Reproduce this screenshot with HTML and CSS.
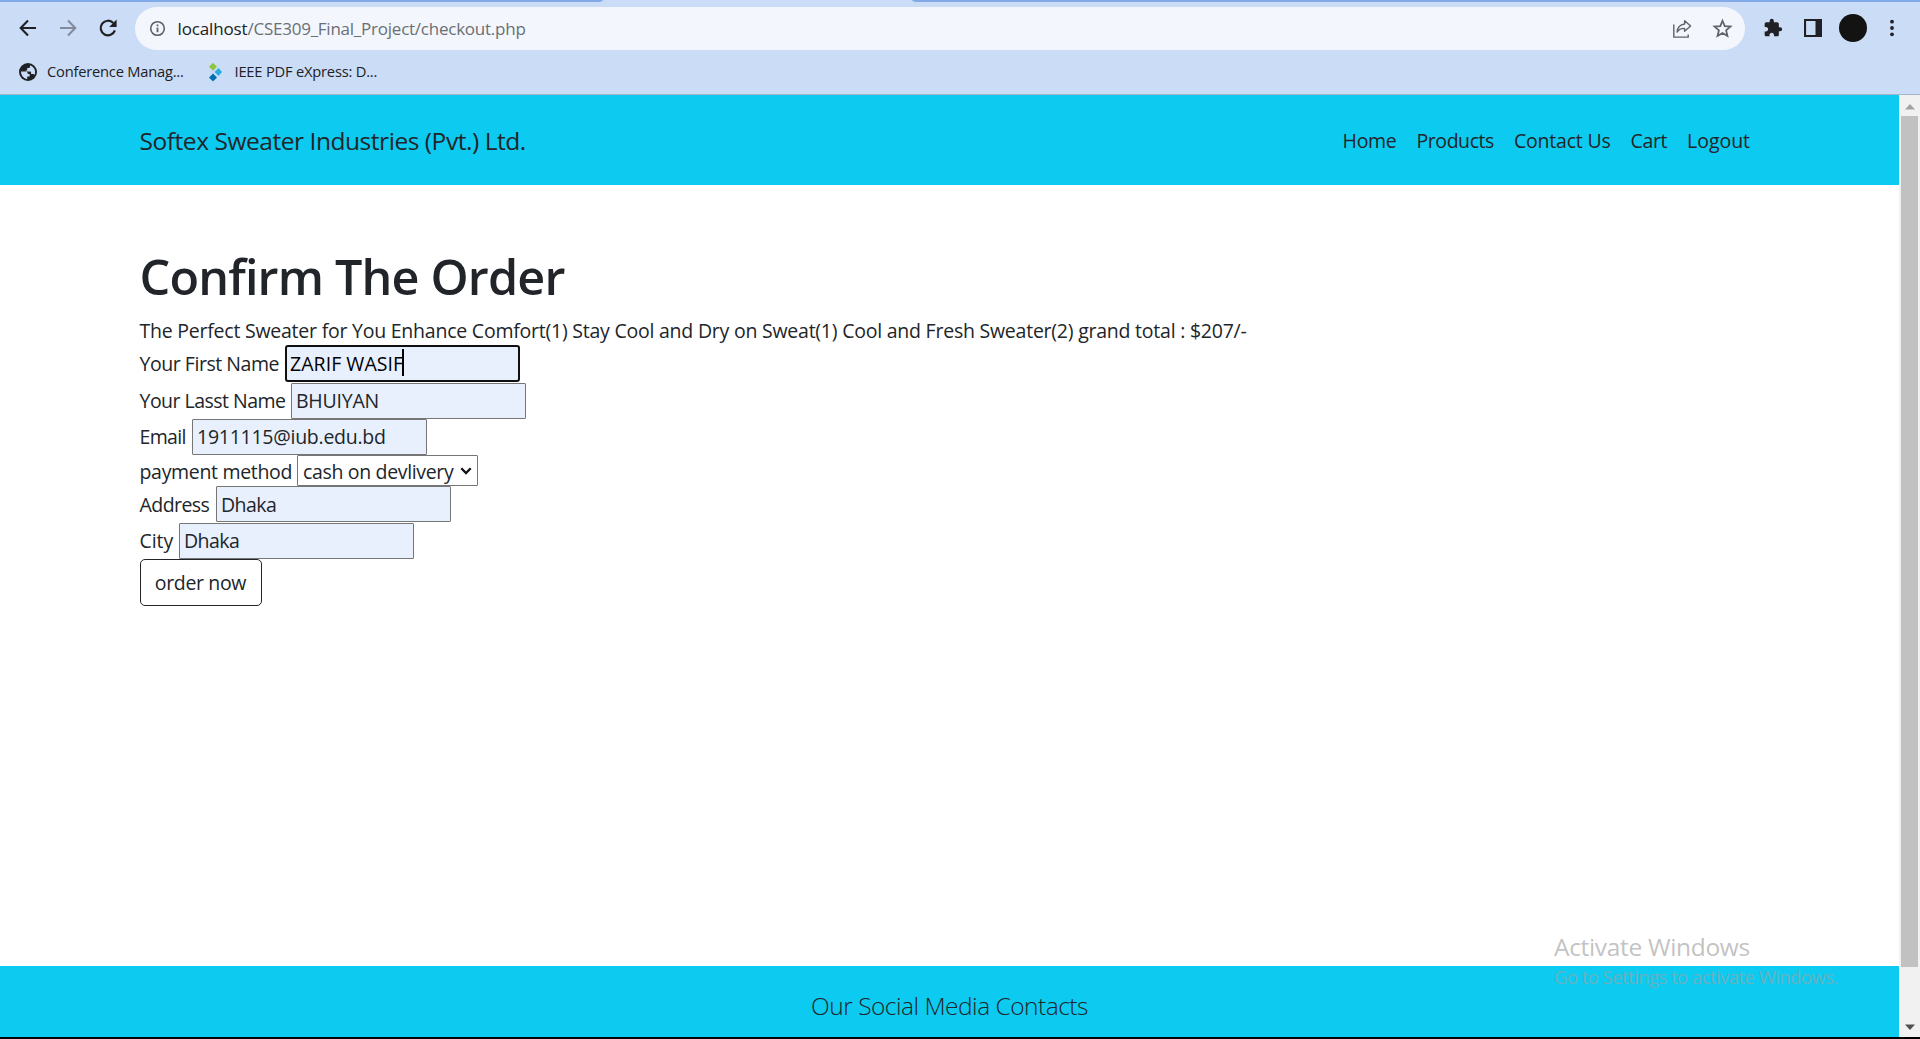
FILE: index.html
```html
<!DOCTYPE html>
<html lang="en">
<head>
<meta charset="utf-8">
<title>Checkout</title>
<link rel="stylesheet" href="styles.css">
</head>
<body>
<div class="window">
  <div class="chrome">
    <div class="tabstrip"><span class="tab-left"></span><span class="tab-right"></span></div>
    <div class="toolbar">
      <svg class="ico back" viewBox="0 0 20 20"><path d="M18 10H3M10 2.5 2.7 10l7.3 7.5" fill="none" stroke="#202124" stroke-width="2.1"/></svg>
      <svg class="ico fwd" viewBox="0 0 20 20"><path d="M2 10h15M10 2.5l7.3 7.5-7.3 7.5" fill="none" stroke="#838b9b" stroke-width="2"/></svg>
      <svg class="ico reload" viewBox="0 0 20 20"><path d="M16.9 12.4A7.3 7.3 0 1 1 15.3 5" fill="none" stroke="#202124" stroke-width="2.2"/><path d="M18.6 1.6V9h-7.4z" fill="#202124"/></svg>
      <div class="omnibox">
        <svg class="ico info" viewBox="0 0 18 18"><circle cx="9" cy="9" r="7.2" fill="none" stroke="#5f6368" stroke-width="1.7"/><path d="M9 8v5M9 4.8v1.8" stroke="#5f6368" stroke-width="1.9"/></svg>
        <span class="url"><span class="host">localhost</span><span class="path">/CSE309_Final_Project/checkout.php</span></span>
        <svg class="ico share" viewBox="0 0 20 20"><path d="M1.8 5.5v12.6h14.4v-2.6" fill="none" stroke="#5f6368" stroke-width="1.4"/><path d="M12.6 1.8 18.6 7l-6 5.3V9.4c-3.6-.1-5.8 1-7.5 3.7.4-4.6 3-7.5 7.5-8.1z" fill="none" stroke="#5f6368" stroke-width="1.4" stroke-linejoin="round"/></svg>
        <svg class="ico star" viewBox="0 0 20 20"><path d="M10 2.6l2.15 5.1 5.45.45-4.15 3.6 1.25 5.4L10 14.3l-4.7 2.85 1.25-5.4L2.4 8.15l5.45-.45z" fill="none" stroke="#5f6368" stroke-width="1.7"/></svg>
      </div>
      <svg class="ico puzzle" viewBox="0 0 24 24"><path fill="#202124" d="M20.5 11H19V7c0-1.1-.9-2-2-2h-4V3.5a2.5 2.5 0 0 0-5 0V5H4c-1.1 0-1.99.9-1.99 2v3.8H3.5c1.49 0 2.7 1.21 2.7 2.7s-1.21 2.7-2.7 2.7H2V20c0 1.1.9 2 2 2h3.8v-1.5c0-1.49 1.21-2.7 2.7-2.7s2.7 1.21 2.7 2.7V22H17c1.1 0 2-.9 2-2v-4h1.5a2.5 2.5 0 0 0 0-5z"/></svg>
      <svg class="ico panel" viewBox="0 0 18 18"><path fill="#202124" fill-rule="evenodd" d="M0 0h18v18H0zM2.1 2.1v13.8h9.4V2.1z"/></svg>
      <span class="avatar"></span>
      <svg class="ico dots" viewBox="0 0 6 18"><g fill="#202124"><circle cx="3" cy="2.7" r="1.9"/><circle cx="3" cy="9" r="1.9"/><circle cx="3" cy="15.3" r="1.9"/></g></svg>
    </div>
    <div class="bookmarks">
      <svg class="ico globe" viewBox="0 0 18 18"><circle cx="9" cy="9" r="9" fill="#202124"/><path d="M2 8.6h4.2c1.6 0 2.6.9 2.6 2.3h1.8v2.6H8.2v2.7A7.2 7.2 0 0 1 2 8.600zM11 2.200v1.500c0 .8-.7 1.400-1.500 1.400H8.200v2.300h-1.500v1.200h4.100c.8 0 1.300.6 1.300 1.300v1h2c.700 0 1.200.4 1.400 1a7.200 7.200 0 0 0-4.500-9.700z" fill="#cbdcf6"/></svg>
      <span class="bm bm-conf">Conference Manag...</span>
      <svg class="ico diamonds" viewBox="0 0 14 20"><path d="M5 .7 9 4.7 5 8.7 1 4.7z" fill="#8dc63f"/><path d="M10.5 6 14 10l-3.5 4L6.5 10z" fill="#29abe2"/><path d="M5 11.5l4 4-4 4-4-4z" fill="#0071b0"/></svg>
      <span class="bm bm-ieee">IEEE PDF eXpress: D...</span>
    </div>
  </div>

  <div class="viewport">
    <div class="page">
      <header class="navbar">
        <span class="brand">Softex Sweater Industries (Pvt.) Ltd.</span>
        <nav class="nav">
          <a class="nav-home">Home</a><a class="nav-products">Products</a><a class="nav-contact">Contact Us</a><a class="nav-cart">Cart</a><a class="nav-logout">Logout</a>
        </nav>
      </header>
      <main class="content">
        <h1>Confirm The Order</h1>
        <p class="summary">The Perfect Sweater for You Enhance Comfort(1) Stay Cool and Dry on Sweat(1) Cool and Fresh Sweater(2) grand total : $207/-</p>
        <form class="order">
          <div class="row row-first"><label class="l-first">Your First Name</label><span class="field"><input class="focused" type="text" value="ZARIF WASIF"><span class="caret"></span></span></div>
          <div class="row"><label class="l-last">Your Lasst Name</label><input class="i-last" type="text" value="BHUIYAN"></div>
          <div class="row"><label class="l-email">Email</label><input class="i-email" type="text" value="1911115@iub.edu.bd"></div>
          <div class="row row-select"><label class="l-pay">payment method</label><span class="field"><select><option>cash on devlivery</option></select><svg class="chevron" viewBox="0 0 12 8"><path d="M1.3 1.3 6 6l4.7-4.7" fill="none" stroke="#111" stroke-width="2.3"/></svg></span></div>
          <div class="row"><label class="l-address">Address</label><input class="i-place" type="text" value="Dhaka"></div>
          <div class="row"><label class="l-city">City</label><input class="i-place" type="text" value="Dhaka"></div>
          <button type="button" class="btn">order now</button>
        </form>
      </main>
      <footer class="footer"><span>Our Social Media Contacts</span></footer>
    </div>
    <div class="scrollbar">
      <svg class="arrow" viewBox="0 0 10 6"><path d="M5 0l5 5.5H0z" fill="#a3a3a3"/></svg>
      <span class="thumb"></span>
      <svg class="arrow arrow-down" viewBox="0 0 10 6"><path d="M0 .5h10L5 6z" fill="#505050"/></svg>
    </div>
  </div>
  <div class="taskbar-edge"></div>
  <div class="watermark"><div class="wm-title">Activate Windows</div><div class="wm-text">Go to Settings to activate Windows.</div></div>
</div>
</body>
</html>
```
FILE: styles.css
```css
* { box-sizing: border-box; }
body {
  margin: 0;
  overflow: hidden;
  font-family: "Open Sans", "Noto Sans", sans-serif;
  font-size: 19.5px;
  color: #212529;
  background: #fff;
}
.window { position: relative; display: flex; flex-direction: column; width: 1920px; height: 1039px; }
.ico { display: block; flex: none; }

/* Browser chrome */
.chrome { flex: none; height: 95px; background: #cbdcf6; border-bottom: 1px solid #a5b3cb; }
.tabstrip { display: flex; justify-content: space-between; height: 2px; }
.tab-left, .tab-right { height: 2px; background: #82aae8; }
.tab-left { width: 603px; border-bottom-right-radius: 6px 2px; }
.tab-right { width: 1008px; border-bottom-left-radius: 6px 2px; }
.toolbar { display: flex; align-items: center; height: 51px; padding-left: 18px; }
.back, .fwd, .reload { width: 20px; height: 20px; }
.fwd { margin-left: 20px; }
.reload { margin-left: 20px; }
.omnibox {
  display: flex;
  flex: none;
  align-items: center;
  width: 1610px;
  height: 43px;
  margin: 2px 0 0 17px;
  padding-left: 14px;
  border-radius: 22px;
  background: #f3f7fd;
}
.info { width: 17px; height: 17px; }
.url { flex: 1; margin-left: 11.5px; font-size: 17px; line-height: 24px; white-space: nowrap; }
.host { color: #202124; letter-spacing: -0.144px; }
.path { color: #6a6e75; letter-spacing: -0.238px; }
.share { width: 20px; height: 20px; margin-right: 20px; }
.star { width: 21px; height: 21px; margin-right: 12px; }
.puzzle { width: 20px; height: 20px; margin-left: 18px; }
.panel { width: 18px; height: 18px; margin-left: 21px; }
.avatar { flex: none; width: 28px; height: 28px; margin-left: 17px; border-radius: 50%; background: #131313; }
.dots { width: 6px; height: 18px; margin-left: 22px; }
.bookmarks { display: flex; align-items: center; height: 38px; padding-left: 19px; }
.globe { width: 18px; height: 18px; }
.bm { padding-bottom: 2px; font-size: 14.7px; line-height: 20px; white-space: nowrap; color: #202124; }
.bm-conf { width: 160px; margin-left: 10px; letter-spacing: -0.215px; }
.diamonds { width: 14px; height: 20px; margin-left: 1px; }
.bm-ieee { margin-left: 12.5px; letter-spacing: -0.205px; }

/* Page */
.viewport { display: flex; flex: none; height: 942px; }
.page { display: flex; flex-direction: column; width: 1899px; background: #fff; }
.navbar {
  display: flex;
  flex: none;
  align-items: center;
  justify-content: space-between;
  height: 90px;
  padding: 0 149px 0 139.5px;
  background: #0dcaf0;
}
.brand { font-size: 24.5px; letter-spacing: -0.45px; }
.nav { display: flex; gap: 20px; }
.nav a { white-space: nowrap; }
.nav-home { letter-spacing: -0.3px; }
.nav-products { letter-spacing: -0.444px; }
.nav-contact { letter-spacing: -0.203px; }
.nav-cart { letter-spacing: -0.363px; }
.nav-logout { letter-spacing: -0.037px; }

.content { flex: 1; padding: 61px 139.5px 0; }
h1 { margin: 0 0 9.5px; font-size: 48.5px; font-weight: 600; line-height: 60px; letter-spacing: -0.82px; }
.summary { margin: 0; line-height: 30px; letter-spacing: -0.231px; white-space: nowrap; }
.row { display: flex; align-items: center; height: 36.2px; }
.row-first { margin-bottom: 0.8px; }
.row-select { height: 31.4px; }
label { flex: none; white-space: nowrap; }
.l-first { width: 145.5px; letter-spacing: -0.462px; }
.l-last { width: 151.5px; letter-spacing: -0.522px; }
.l-email { width: 52.5px; letter-spacing: -0.662px; }
.l-pay { width: 157.5px; letter-spacing: -0.32px; }
.l-address { width: 76.5px; letter-spacing: -0.567px; }
.l-city { width: 39.5px; letter-spacing: -0.052px; }
.field { position: relative; display: flex; }
input {
  width: 235px;
  height: 36px;
  padding: 0 4px;
  border: 1px solid #767676;
  border-radius: 1px;
  outline: none;
  background: #e8f0fe;
  color: #212529;
  font: inherit;
}
.focused { height: 37px; padding: 0 3px; border: 2px solid #101010; border-radius: 3px; color: #000; letter-spacing: 0.043px; }
.caret { position: absolute; left: 117px; top: 4px; width: 2px; height: 27px; background: #000; }
.i-last { letter-spacing: -0.228px; }
.i-email { letter-spacing: -0.256px; }
.i-place { letter-spacing: -0.547px; }
select {
  appearance: none;
  width: 181px;
  height: 31px;
  padding: 1px 5px 0;
  border: 1px solid #767676;
  border-radius: 1px;
  background: #fff;
  color: #212529;
  font: inherit;
  letter-spacing: -0.336px;
}
.l-pay { padding-top: 1px; }
.chevron { position: absolute; right: 6px; top: 12px; width: 12px; height: 8px; }
.btn {
  display: block;
  width: 122px;
  height: 47px;
  margin-top: 0.5px;
  padding: 0;
  border: 1px solid #212529;
  border-radius: 5px;
  background: #fff;
  color: #212529;
  font: inherit;
  letter-spacing: -0.351px;
}
.footer {
  flex: none;
  height: 71px;
  padding-top: 22px;
  background: #0dcaf0;
  font-size: 24.5px;
  font-weight: 300;
  line-height: 36px;
  letter-spacing: -0.5px;
  text-align: center;
}
.scrollbar { display: flex; flex-direction: column; align-items: center; width: 21px; padding-top: 9px; background: #f1f1f1; }
.arrow { width: 10px; height: 6px; }
.thumb { width: 17px; height: 851px; margin-top: 6px; background: #c1c1c1; }
.arrow-down { margin-top: 57px; }
.taskbar-edge { flex: none; height: 2px; background: #000; }

/* OS overlay */
.watermark { position: absolute; left: 1554px; top: 931px; color: rgba(160, 160, 160, 0.65); white-space: nowrap; }
.wm-title { font-size: 24.5px; line-height: 32px; letter-spacing: -0.326px; }
.wm-text { font-size: 18.5px; line-height: 28px; letter-spacing: -0.552px; color: rgba(160, 160, 160, 0.6); }
```
